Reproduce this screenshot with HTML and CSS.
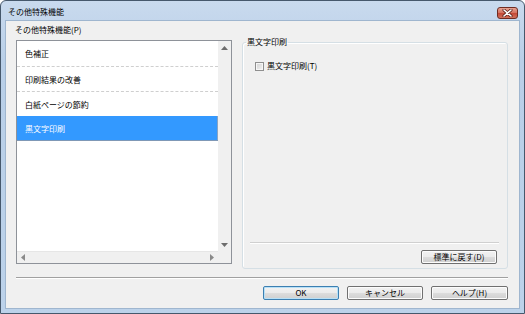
FILE: index.html
```html
<!DOCTYPE html>
<html lang="ja">

<head>
    <meta charset="UTF-8">
    <title>その他特殊機能</title>
    <link rel="stylesheet" href="styles.css">
</head>

<body>
    <div class="window">
        <div class="titlebar">
            <span class="title">その他特殊機能</span>
            <span class="close">
                <svg width="11" height="8" viewBox="0 0 11 8">
                    <path d="M2 1 L9 7 M9 1 L2 7" stroke="#5a1e16" stroke-width="3" stroke-linecap="round" />
                    <path d="M2 1 L9 7 M9 1 L2 7" stroke="#fff" stroke-width="1.6" stroke-linecap="round" />
                </svg>
            </span>
        </div>

        <div class="client">
            <div class="panes">
                <div class="left">
                    <div class="label">その他特殊機能(P)</div>
                    <div class="listbox">
                        <div class="list-main">
                            <ul class="items">
                                <li class="item">色補正</li>
                                <li class="item">印刷結果の改善</li>
                                <li class="item">白紙ページの節約</li>
                                <li class="item selected">黒文字印刷</li>
                            </ul>
                            <div class="vscroll">
                                <span class="arrow">
                                    <svg width="7" height="4" viewBox="0 0 7 4"><polygon points="0,4 3.5,0 7,4" fill="#6d6d6d" /></svg>
                                </span>
                                <span class="track"></span>
                                <span class="arrow">
                                    <svg width="7" height="4" viewBox="0 0 7 4"><polygon points="0,0 3.5,4 7,0" fill="#6d6d6d" /></svg>
                                </span>
                            </div>
                        </div>
                        <div class="hscroll-row">
                            <div class="hscroll">
                                <span class="arrow">
                                    <svg width="4" height="7" viewBox="0 0 4 7"><polygon points="4,0 0,3.5 4,7" fill="#8a8a8a" /></svg>
                                </span>
                                <span class="track"></span>
                                <span class="arrow">
                                    <svg width="4" height="7" viewBox="0 0 4 7"><polygon points="0,0 4,3.5 0,7" fill="#8a8a8a" /></svg>
                                </span>
                            </div>
                            <div class="corner"></div>
                        </div>
                    </div>
                </div>

                <fieldset class="group">
                    <legend>黒文字印刷</legend>
                    <label class="check"><span class="box"></span>黒文字印刷(T)</label>
                    <div class="spacer"></div>
                    <div class="rule"></div>
                    <div class="group-buttons">
                        <button class="btn">標準に戻す(D)</button>
                    </div>
                </fieldset>
            </div>

            <div class="separator"></div>

            <div class="buttons">
                <button class="btn default">OK</button>
                <button class="btn">キャンセル</button>
                <button class="btn help">ヘルプ(H)</button>
            </div>
        </div>
    </div>
</body>

</html>
```

FILE: styles.css
```css
* {
    padding: 0;
    margin: 0;
    box-sizing: border-box;
}

body {
    font-family: "Noto Sans CJK JP", "Noto Sans", sans-serif;
    font-size: 8px;
    color: #000;
    background: #fff;
}

.window {
    width: 525px;
    height: 314px;
    border: 1px solid #46586c;
    border-radius: 6px 6px 0 0;
    background: linear-gradient(#c9daee, #b9cfe8 60px, #bcd2ea);
    padding: 0 4px 4px 4px;

    display: flex;
    flex-direction: column;
}

.titlebar {
    height: 19px;
    display: flex;
    justify-content: space-between;
}

.title {
    padding: 5px 0 0 3px;
    line-height: 12px;
}

.close {
    width: 21px;
    height: 12px;
    margin: 6px 2px 0 0;
    border: 1px solid #6f2c22;
    border-radius: 3px;
    background: linear-gradient(#e8a393, #d57462 45%, #c54a37 55%, #d0705c);

    display: flex;
    align-items: center;
    justify-content: center;
}

.client {
    flex: 1;
    background: #f0f0f0;
    border: 1px solid #9fb6cf;
    padding: 3px 11px 0 10px;

    display: flex;
    flex-direction: column;
}

.panes {
    display: flex;
    gap: 10px;
}

.left {
    width: 216px;
}

.label {
    line-height: 12px;
    height: 12px;
    margin-bottom: 4px;
    padding-left: 0;
    margin-left: -1px;
}

/* list box */

.listbox {
    height: 224px;
    border: 1px solid #8e9299;
    background: #fff;

    display: flex;
    flex-direction: column;
}

.list-main {
    flex: 1;
    display: flex;
}

.items {
    flex: 1;
    list-style: none;
}

.item {
    height: 25px;
    line-height: 25px;
    padding-left: 8px;
}

.item + .item {
    border-top: 1px dashed #cfcfcf;
}

.item.selected {
    border-top: none;
    background: #3399ff;
    color: #fff;
    box-shadow: inset 0 -1px #7f98b6, inset -1px 0 #8aa4c2;
}

.vscroll {
    width: 13px;
    background: #f0f0f0;
    display: flex;
    flex-direction: column;
}

.vscroll .arrow {
    height: 13px;
    display: flex;
    align-items: center;
    justify-content: center;
}

.track {
    flex: 1;
}

.hscroll-row {
    height: 12px;
    display: flex;
}

.hscroll {
    flex: 1;
    background: #f0f0f0;
    border-top: 1px solid #e6e6e6;
    display: flex;
}

.hscroll .arrow {
    width: 12px;
    display: flex;
    align-items: center;
    justify-content: center;
}

.corner {
    width: 13px;
    background: #f0f0f0;
}

/* group box */

.group {
    width: 266px;
    height: 232px;
    margin-top: 13px;
    border: 1px solid #d5dfe5;
    border-radius: 3px;
    box-shadow: inset 1px 1px #fff;

    display: flex;
    flex-direction: column;
}

.group legend {
    line-height: 10px;
    margin-left: 3px;
    padding: 0 1px;
}

.check {
    margin: 13px 0 0 12px;
    line-height: 12px;
    display: flex;
    align-items: center;
    gap: 3px;
}

.box {
    width: 9px;
    height: 9px;
    border: 1px solid #8f8f8f;
    background: linear-gradient(135deg, #d2d2d2, #f4f4f4);
    box-shadow: inset 0 0 0 1px #f6f6f6;
}

.spacer {
    flex: 1;
}

.rule {
    margin: 0 8px 0 7px;
    border-top: 1px solid #d0d0d0;
    border-bottom: 1px solid #fff;
}

.group-buttons {
    display: flex;
    justify-content: flex-end;
    margin: 6px 10px 4px 0;
}

/* buttons */

.btn {
    width: 76px;
    height: 14px;
    font-family: inherit;
    font-size: 8px;
    line-height: 12px;
    color: #000;
    border: 1px solid #707070;
    border-radius: 2px;
    background: linear-gradient(#f2f2f2, #ebebeb 50%, #dddddd 51%, #cfcfcf);
    box-shadow: inset 0 0 0 1px #fcfcfc;
}

.btn.default {
    border-color: #3c7fb1;
    box-shadow: inset 0 0 0 1px #b7e0f7;
}

.btn.help {
    width: 77px;
}

.separator {
    margin-top: 8px;
    border-top: 1px solid #a0a0a0;
    border-bottom: 1px solid #fff;
}

.buttons {
    margin-top: 7px;
    display: flex;
    justify-content: flex-end;
    gap: 8px;
}
```
